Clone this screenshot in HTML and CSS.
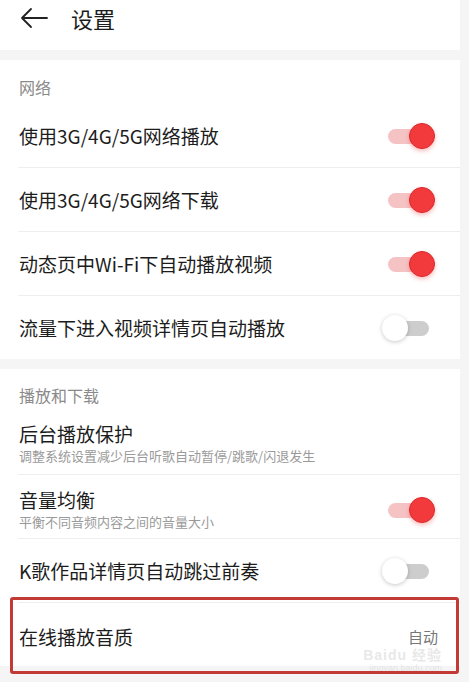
FILE: index.html
```html
<!DOCTYPE html>
<html lang="zh-CN">
<head>
<meta charset="utf-8">
<title>设置</title>
<link rel="stylesheet" href="styles.css">
</head>
<body>
<div class="page">
  <header class="header">
    <svg class="back" width="28" height="22" viewBox="0 0 28 22"><path d="M27 11 H2 M11 2 L2 11 L11 20" fill="none" stroke="#222" stroke-width="1.8" stroke-linecap="round" stroke-linejoin="round"/></svg>
    <h1 class="title">设置</h1>
  </header>

  <section class="card card-net">
    <div class="label">网络</div>
    <div class="row"><span class="text">使用3G/4G/5G网络播放</span><span class="toggle on"><i></i></span></div>
    <div class="row"><span class="text">使用3G/4G/5G网络下载</span><span class="toggle on"><i></i></span></div>
    <div class="row"><span class="text">动态页中Wi-Fi下自动播放视频</span><span class="toggle on"><i></i></span></div>
    <div class="row last"><span class="text">流量下进入视频详情页自动播放</span><span class="toggle"><i></i></span></div>
  </section>

  <section class="card card-play">
    <div class="label">播放和下载</div>
    <div class="row row-two r1"><div class="stack"><span class="text">后台播放保护</span><span class="sub">调整系统设置减少后台听歌自动暂停/跳歌/闪退发生</span></div></div>
    <div class="row row-two r2"><div class="stack"><span class="text">音量均衡</span><span class="sub">平衡不同音频内容之间的音量大小</span></div><span class="toggle on"><i></i></span></div>
    <div class="row r3"><span class="text">K歌作品详情页自动跳过前奏</span><span class="toggle"><i></i></span></div>
    <div class="row last quality"><span class="text">在线播放音质</span><span class="value">自动</span>
      <div class="mark"><span class="mark-top">Baidu 经验</span><span class="mark-url">jingyan.baidu.com</span></div>
      <div class="highlight"></div>
    </div>
  </section>
</div>
</body>
</html>
```
FILE: styles.css
```css
* { box-sizing: border-box; margin: 0; padding: 0; }
html, body { background: #f5f5f5; }
body {
  width: 469px;
  height: 682px;
  overflow: hidden;
  font-family: "Noto Sans CJK SC", "Noto Sans", sans-serif;
  color: #1c1c1c;
}
.page { width: 460px; }
.header {
  height: 50px;
  background: #fff;
  display: flex;
  align-items: center;
  padding: 0 0 14px 20px;
}
.back { display: block; }
.title {
  font-size: 22px;
  font-weight: 400;
  margin-left: 23px;
  line-height: 30px;
}
.card {
  background: #fff;
  margin-top: 10px;
}
.label {
  height: 44px;
  padding: 16px 0 0 19px;
  font-size: 16px;
  line-height: 22px;
  color: #8a8a8a;
}
.card-play .label { padding-top: 15px; }
.row {
  position: relative;
  height: 64px;
  margin-left: 18px;
  padding-left: 1px;
  padding-right: 25px;
  border-bottom: 1px solid #eeeeee;
  display: flex;
  align-items: center;
  justify-content: space-between;
}
.row.last { border-bottom: none; height: 63px; }
.text { font-size: 19px; line-height: 24px; }
.row-two { height: 62px; }
.row-two.r2 { height: 64px; }
.r1 { padding-top: 1px; }
.r2 { padding-top: 6px; }
.stack { display: flex; flex-direction: column; }
.sub { font-size: 13px; line-height: 20px; color: #9a9a9a; }

.toggle {
  position: relative;
  width: 53px;
  height: 28px;
  flex: none;
}
.toggle::before {
  content: "";
  position: absolute;
  left: 6px;
  right: 6px;
  top: 7px;
  height: 15px;
  border-radius: 8px;
  background: #cdcdcd;
}
.toggle i {
  position: absolute;
  left: 0;
  top: 1px;
  width: 26px;
  height: 26px;
  border-radius: 50%;
  background: #fff;
  box-shadow: 0 1px 4px rgba(0,0,0,0.22);
}
.toggle.on::before { background: #f6c3c4; }
.toggle.on i {
  left: auto;
  right: 0;
  background: #f23a3c;
  border: 1px solid #d8282c;
  box-shadow: 0 2px 4px rgba(240,60,60,0.35);
}

.quality { height: 68px; padding-top: 4px; }
.value { font-size: 15px; line-height: 18px; color: #777; margin-right: -3px; position: relative; z-index: 1; }
.mark {
  position: absolute;
  right: 18px;
  top: 45px;
  display: flex;
  flex-direction: column;
  align-items: flex-end;
  color: rgba(195,195,195,0.4);
  font-family: "Liberation Sans", "Noto Sans CJK SC", sans-serif;
}
.mark-top { font-size: 14px; font-weight: 700; line-height: 15px; letter-spacing: 1px; }
.mark-url { font-size: 9px; line-height: 10px; }
.highlight {
  position: absolute;
  left: -8px;
  top: -6px;
  width: 449px;
  height: 77px;
  border: 3px solid #c23a33;
  border-radius: 3px;
  pointer-events: none;
}
```
